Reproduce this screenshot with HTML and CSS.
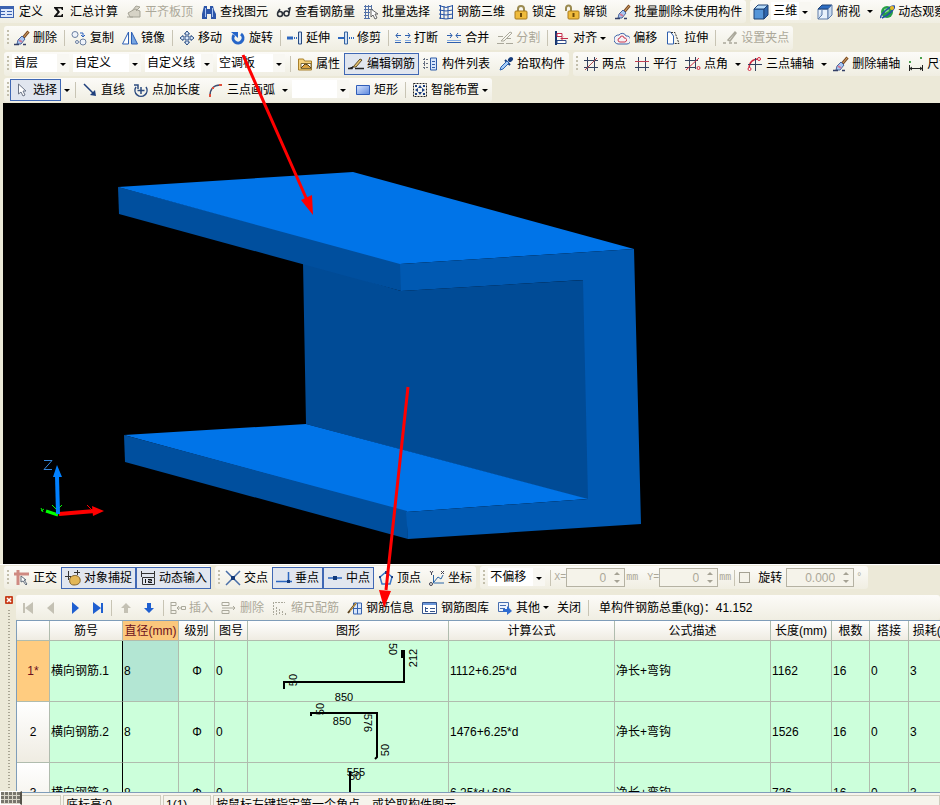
FILE: index.html
```html
<!DOCTYPE html>
<html lang="zh-CN">

<head>
    <meta charset="UTF-8">
    <meta name="viewport" content="width=device-width, initial-scale=1.0">
    <title>编辑钢筋</title>
    <link rel="stylesheet" href="styles.css">
</head>

<body>
    <!-- Icon sprite -->
    <svg class="sprite" width="0" height="0" aria-hidden="true">
        <symbol id="i-define" viewBox="0 0 16 16"><path fill="#3c62b0" d="M0 2h14v12H0z"/><path fill="#dfe9fb" d="M1 5h12v8H1z"/><path stroke="#3c62b0" d="M1 7.500h4M1 10.500h4M7 7.500h5M7 10.500h5"/></symbol>
        <symbol id="i-sum" viewBox="0 0 16 16"><path fill="#111" d="M3 3h9v3h-1l-1-1.500H6.500L9 8l-3 3.500h4L11 10h1v3H3v-1l3.500-4L3 4z"/></symbol>
        <symbol id="i-level" viewBox="0 0 16 16"><path fill="#d6d3c6" stroke="#a5a396" d="M2 9l7-4 5 2v6H4zM6 7l4-5 4 1-4 4M1 13h6"/></symbol>
        <symbol id="i-find" viewBox="0 0 16 16"><path fill="#2c55a8" d="M3 2h3v3h3V2h3l1 4 2 4v5h-5v-5H6v5H1v-5l1-4z"/><path stroke="#a9c4f2" d="M4.500 4v9M11.500 4v9"/></symbol>
        <symbol id="i-glasses" viewBox="0 0 16 16"><g fill="none" stroke="#2b3038" stroke-width="1.500"><circle cx="4" cy="10" r="2.500"/><circle cx="10.500" cy="9.500" r="2.500"/><path d="M6 10l2-1M13 9l1-5-2 1M2 8l2-3"/></g></symbol>
        <symbol id="i-batch" viewBox="0 0 16 16"><path fill="none" stroke="#5472a8" d="M1 2.500h8M1 5.500h9M1 8.500h6M1 11.500h5M2.500 1v13M5.500 1v13M8.500 1v6M1 14.500h6"/><path fill="#fff" stroke="#666" d="M8 5v8l2-2 2 4 2-1-2-4h3z"/></symbol>
        <symbol id="i-mesh" viewBox="0 0 16 16"><path fill="none" stroke="#2955a5" d="M1 1.500l7 2 7-2M1 6l7 1 7-1M1 10l7 1 7-1M1 14l7 1 7-1M2.500 1v14M6 2v13M10 2v13M14.500 1v14"/></symbol>
        <symbol id="i-lock" viewBox="0 0 16 16"><path fill="none" stroke="#9a8a50" stroke-width="2" d="M5 8V5a3 3 0 0 1 6 0v3"/><rect x="2" y="7" width="12" height="8" rx="1" fill="#efbb3c" stroke="#a87a1c"/><path stroke="#6d4a08" stroke-width="2" d="M8 9v4"/></symbol>
        <symbol id="i-unlock" viewBox="0 0 16 16"><path fill="none" stroke="#9a8a50" stroke-width="2" d="M2 7V4a2.500 2.500 0 0 1 5 0v3"/><rect x="4" y="7" width="11" height="8" rx="1" fill="#efbb3c" stroke="#a87a1c"/><path stroke="#6d4a08" stroke-width="2" d="M9.500 9v4"/></symbol>
        <symbol id="i-brush" viewBox="0 0 16 16"><path stroke="#7a4b26" stroke-width="3" d="M14.500 1.500L9 8"/><path stroke="#dfae6b" d="M14.500 1.500L9 8"/><path fill="#a8c6f0" stroke="#48649c" d="M8 6l3 3-4 5H3l1-4z"/><path stroke="#d27a96" stroke-width="2" d="M5 10l3 2"/><path stroke="#333f66" stroke-width="1.500" d="M0 14.500h5M9 14.500h3"/></symbol>
        <symbol id="i-cube" viewBox="0 0 16 16"><path fill="#5595d8" stroke="#1e4277" d="M1 5h10v10H1z"/><path fill="#b8dcfa" stroke="#1e4277" d="M1 5l4-4h10l-4 4z"/><path fill="#2f66ad" stroke="#1e4277" d="M11 5l4-4v10l-4 4z"/></symbol>
        <symbol id="i-cubetop" viewBox="0 0 16 16"><path fill="#e8f1fb" stroke="#5d7ba8" d="M1 5h10v10H1z"/><path fill="#2d6cc0" stroke="#1e4277" d="M1 5l4-4h10l-4 4z"/><path fill="#c9dbf0" stroke="#5d7ba8" d="M11 5l4-4v10l-4 4zM1 15l4-4V5"/></symbol>
        <symbol id="i-orbit" viewBox="0 0 16 16"><circle cx="8" cy="8" r="6" fill="#27a046"/><path fill="#8be08f" d="M5 5l4-1 1 3-4 2z"/><path fill="none" stroke="#2450a8" stroke-width="1.500" d="M2 14C0 11 12 1 15 2s-6 10-12 12"/><circle cx="13" cy="4" r="2" fill="#e8b820"/></symbol>
        <symbol id="i-copy" viewBox="0 0 16 16"><g fill="#eef3fb" stroke="#6b7f9f"><circle cx="4" cy="4.500" r="3"/><circle cx="12" cy="12" r="3"/><circle cx="6" cy="12" r="1.500"/></g><path fill="none" stroke="#2a61c0" d="M9 3h3v4M10 5l2 2 2-2"/></symbol>
        <symbol id="i-mirror" viewBox="0 0 16 16"><path fill="#fff" stroke="#2c5fb4" d="M6.500 2v12h-6z"/><path fill="#78a6e2" stroke="#2c5fb4" d="M9.500 2v12h6z"/></symbol>
        <symbol id="i-move" viewBox="0 0 16 16"><path fill="#dce9fa" stroke="#2a4d82" d="M8 1l2.500 3H9v3h3V5.500L15 8l-3 2.500V9H9v3h1.500L8 15l-2.500-3H7V9H4v1.500L1 8l3-2.500V7h3V4H5.500z"/></symbol>
        <symbol id="i-rotate" viewBox="0 0 16 16"><path fill="none" stroke="#2665c8" stroke-width="3" d="M4 5a5 5 0 1 0 7-1"/><path fill="#2665c8" d="M1 2h7v6z"/></symbol>
        <symbol id="i-extend" viewBox="0 0 16 16"><path stroke="#2e68c0" stroke-width="3" d="M0 8h6"/><path stroke="#2e68c0" stroke-width="2" stroke-dasharray="1 1" d="M7 8h4"/><path fill="#cfe0f8" stroke="#274a80" d="M11.500 2h3v12h-3z"/></symbol>
        <symbol id="i-trim" viewBox="0 0 16 16"><path stroke="#2e68c0" stroke-width="2" d="M0 8h6"/><path stroke="#2e68c0" stroke-width="2" stroke-dasharray="1 1" d="M11 8h5"/><path fill="#cfe0f8" stroke="#35639f" d="M6.500 2h3v12h-3z"/></symbol>
        <symbol id="i-break" viewBox="0 0 16 16"><path fill="none" stroke="#2e5fae" d="M0 12.500h6M10 12.500h6M1 5.500h5M10 5.500h5M3 3L1 5.500 3 8M13 3l2 2.500L13 8"/><path stroke="#86aee6" d="M0 10.500h6M10 10.500h6"/></symbol>
        <symbol id="i-join" viewBox="0 0 16 16"><path fill="none" stroke="#2e5fae" d="M1 12.500h14M1 5.500h5M10 5.500h5M4 3l2 2.500L4 8M12 3l-2 2.500L12 8"/><path stroke="#86aee6" d="M1 10.500h14"/></symbol>
        <symbol id="i-split" viewBox="0 0 16 16"><path fill="none" stroke="#aaa89b" d="M0 13.500h7M9 13.500h7M4 11l9-9 2 1-8 8zM1 6.500h5M10 8.500h4"/></symbol>
        <symbol id="i-align" viewBox="0 0 16 16"><path stroke="#17356e" stroke-width="2" d="M2 1v14"/><path fill="#fff" stroke="#c22b48" d="M3 3.500h5v3H3z"/><path fill="#fff" stroke="#2a4a88" d="M3 10.500h9v3H3z"/><path fill="none" stroke="#c22b48" d="M14 8.500H7M9 6.500l-2 2 2 2"/></symbol>
        <symbol id="i-offset" viewBox="0 0 16 16"><path fill="#f6f0f4" stroke="#3d66a8" d="M5 5a4 4 0 0 1 7 1 4 4 0 0 1 1 8H4a4 4 0 0 1 1-9z"/><path fill="none" stroke="#c8374e" d="M6 8a2 2 0 0 1 4 0 2 2 0 0 1 1 4H6a2 2 0 0 1 0-4z"/></symbol>
        <symbol id="i-stretch" viewBox="0 0 16 16"><path fill="#fff" stroke="#2e5fae" d="M2.500 2v12h6V6l-3-4z"/><path fill="none" stroke="#333" stroke-dasharray="2 1" d="M6 2.500h4l4 11H9"/></symbol>
        <symbol id="i-grip" viewBox="0 0 16 16"><path fill="none" stroke="#aaa89b" stroke-width="1.500" d="M1 13h3M7 13h3M12 13h3M6 10l7-8 1 1-6 8z"/></symbol>
        <symbol id="i-prop" viewBox="0 0 16 16"><path fill="#f6d27c" stroke="#a8802c" d="M1.500 3h5l1 2h7v9h-13z"/><path fill="#fff" stroke="#7c6a3a" d="M4 7.500h10v5H4z"/><path fill="#d8a040" stroke="#5b4210" d="M4 12l4-4 3 1 3 3"/></symbol>
        <symbol id="i-editbar" viewBox="0 0 16 16"><path stroke="#222" stroke-width="1.500" d="M0 12.500h4l1-2M7 12.500h9"/><path fill="#e8c46e" stroke="#5b4a28" d="M5 11l7-8 2 1-6 7z"/></symbol>
        <symbol id="i-list" viewBox="0 0 16 16"><path stroke="#666f80" stroke-dasharray="2 1" d="M0 3.500h5M0 7.500h5M0 11.500h5M1.500 2v12"/><path fill="#d6e5fa" stroke="#2f5ca8" d="M7.500 2h6v12h-6z"/><path stroke="#2f5ca8" d="M9 5.500h3M9 8.500h3M9 11.500h3"/></symbol>
        <symbol id="i-pick" viewBox="0 0 16 16"><path stroke="#153c7c" stroke-width="4" stroke-linecap="round" d="M12 4l1-1"/><path stroke="#153c7c" stroke-width="2" d="M7 4l5 5"/><path fill="#a7cdf6" stroke="#2a61b2" d="M9 5l2 2-6 6-3 1 1-3z"/></symbol>
        <symbol id="i-twopt" viewBox="0 0 16 16"><path fill="none" stroke="#33415e" d="M1 4.500h14M1 11.500h14M4.500 1v14M11.500 1v14"/><path stroke="#b34c52" d="M2 14L14 2"/></symbol>
        <symbol id="i-parallel" viewBox="0 0 16 16"><path fill="none" stroke="#33415e" d="M4.500 1v14M11.500 1v14M1 11.500h14"/><path stroke="#c04050" d="M1 5.500h14"/></symbol>
        <symbol id="i-ptangle" viewBox="0 0 16 16"><path fill="none" stroke="#33415e" d="M4.500 1v14M10.500 1v12M0 4.500h13M0 11.500h10"/><path fill="none" stroke="#d02840" d="M1 14L14 2"/><circle cx="13.500" cy="12" r="1.500" fill="none" stroke="#d02840"/></symbol>
        <symbol id="i-threeaxis" viewBox="0 0 16 16"><path fill="none" stroke="#d02840" stroke-width="1.500" d="M2 13c0-6 3-10 10-10"/><path stroke="#33415e" d="M1 8.500h14M8.500 2v13"/><circle cx="2.500" cy="13" r="1.500" fill="#fff" stroke="#d02840"/><circle cx="12" cy="3" r="1.500" fill="#fff" stroke="#d02840"/></symbol>
        <symbol id="i-dim" viewBox="0 0 16 16"><path fill="none" stroke="#222" d="M1.500 9v6M14.500 9v6M2 12.500h12M4 11l-2 1.500L4 14M12 11l2 1.500-2 1.500"/><path fill="#48a04c" d="M1 5h2v2H1zM12 1h2v2h-2z"/></symbol>
        <symbol id="i-cursor" viewBox="0 0 16 16"><path fill="#fff" stroke="#6b7486" d="M4.500 2v10l2.500-2 2 4 2-1-2-4h3z"/></symbol>
        <symbol id="i-line" viewBox="0 0 16 16"><path stroke="#1f3f7c" stroke-width="1.500" d="M2 2l10 10"/><path fill="#1f3f7c" d="M14 14l-6-1 5-5z"/></symbol>
        <symbol id="i-ptlen" viewBox="0 0 16 16"><path fill="none" stroke="#2d4c80" stroke-width="1.500" d="M3 5a6 6 0 1 0 10 0M1 3h4v4M8 5v7M4.500 8.500h7"/></symbol>
        <symbol id="i-arc" viewBox="0 0 16 16"><path fill="none" stroke="#3f4e70" stroke-width="1.500" d="M2 14C2 7 6 3 12 3"/><path fill="#e0503c" d="M1 12h2v3H1zM11 2h3v2h-3zM4 5h2v2H4z"/></symbol>
        <symbol id="i-rect" viewBox="0 0 16 16"><defs><linearGradient id="g-rect" x2="1" y2="1"><stop stop-color="#d9e6ff"/><stop offset="1" stop-color="#5a86dc"/></linearGradient></defs><path fill="url(#g-rect)" stroke="#2e5cb8" d="M1.500 3.500h13v9h-13z"/></symbol>
        <symbol id="i-smart" viewBox="0 0 16 16"><path fill="none" stroke="#222" stroke-dasharray="2 1" d="M1.500 1.500h13v13h-13z"/><path fill="#1b3e80" d="M8 3l2 3H6zM8 13l2-3H6zM3 8l3-2v4zM13 8l-3-2v4zM3 3h2v2H3zM11 3h2v2h-2zM3 11h2v2H3zM11 11h2v2h-2z"/></symbol>
        <symbol id="i-ortho" viewBox="0 0 16 16"><path fill="none" stroke="#cf8a82" stroke-width="3" d="M4 15V4h11M0 4h4V0"/><path fill="#fff" stroke="#5f6a78" d="M7 6v6l2-1 3 4 1-1-3-4h2z"/></symbol>
        <symbol id="i-snap" viewBox="0 0 16 16"><path fill="none" stroke="#333" d="M3.500 1v9M0 6.500h6M12.500 0v5M9 2.500h6"/><path fill="#e3b757" stroke="#80602a" d="M5 8c3-4 9-3 10 1s-2 6-6 6-5-3-4-7z"/></symbol>
        <symbol id="i-dyn" viewBox="0 0 16 16"><path fill="none" stroke="#333" d="M1.500 1v6M14.500 1v6M2 3.500h12M2.500 7.500h12v7h-12z"/><path fill="none" stroke="#111" d="M5.500 9v4M8 9.500h3.500v1.500H8.500v1.500H12"/></symbol>
        <symbol id="i-cross" viewBox="0 0 16 16"><path stroke="#4a6fa8" stroke-width="1.500" d="M1 1l14 14M15 1L1 15"/><path fill="#123a7c" d="M6 6h4v4H6z"/></symbol>
        <symbol id="i-perp" viewBox="0 0 16 16"><path stroke="#2b66c0" stroke-width="1.500" d="M0 11.500h16M12.500 2v9"/><path fill="#123a7c" d="M11 10h3v3h-3z"/></symbol>
        <symbol id="i-mid" viewBox="0 0 16 16"><path stroke="#2b66c0" stroke-width="1.500" d="M1 8h14"/><path fill="#123a7c" d="M6 6h4v4H6z"/></symbol>
        <symbol id="i-vertex" viewBox="0 0 16 16"><path fill="none" stroke="#3b77c8" stroke-width="1.500" d="M8 2l6 5-2 7H4L2 7z"/><path fill="#1b3e80" d="M7 1h3v3H7zM1 6h2v2H1zM13 6h2v2h-2z"/></symbol>
        <symbol id="i-coord" viewBox="0 0 16 16"><path fill="none" stroke="#2b66a8" d="M4.500 5v8H15M5 12l4-5 3 2 2-4"/><path fill="none" stroke="#445" d="M1 1l1.500 2L4 1M2.500 3v2M12 1l3 3M15 1l-3 3"/><circle cx="2" cy="14" r="1.500" fill="none" stroke="#445"/></symbol>
        <symbol id="i-first" viewBox="0 0 16 16"><path fill="currentColor" d="M3 3h2v10H3zM13 2v12L5 8z"/></symbol>
        <symbol id="i-prev" viewBox="0 0 16 16"><path fill="currentColor" d="M11 2v12L4 8z"/></symbol>
        <symbol id="i-next" viewBox="0 0 16 16"><path fill="currentColor" d="M6 2v12l7-6z"/></symbol>
        <symbol id="i-last" viewBox="0 0 16 16"><path fill="currentColor" d="M12 3h2v10h-2zM4 2v12l8-6z"/></symbol>
        <symbol id="i-up" viewBox="0 0 16 16"><path fill="currentColor" d="M8 3l5 5h-3v5H6V8H3z"/></symbol>
        <symbol id="i-down" viewBox="0 0 16 16"><path fill="currentColor" d="M8 13l5-5h-3V3H6v5H3z"/></symbol>
        <symbol id="i-insert" viewBox="0 0 16 16"><path fill="none" stroke="#aaa89b" d="M1 2.500h5v3H1M1 10.500h5v3H1M1 2v12M7 8h4M9 6L7 8l2 2M11.500 6.500h4v3h-4z"/></symbol>
        <symbol id="i-delrow" viewBox="0 0 16 16"><path fill="none" stroke="#aaa89b" d="M1 2.500h7v3H1zM1 10.500h7v3H1zM1 8h13M12 6l2 2-2 2"/></symbol>
        <symbol id="i-scale" viewBox="0 0 16 16"><path fill="none" stroke="#aaa89b" d="M1.500 2v13M4.500 7v8M7.500 9v6M10.500 11v4M13.500 13v2M3 2.500h10" stroke-dasharray="2 1"/></symbol>
        <symbol id="i-info" viewBox="0 0 16 16"><path fill="#d9e7fb" stroke="#3864b0" d="M6.500 3h8v11h-8zM10.500 3v11M7 8.500h8"/><path stroke="#5b421d" stroke-width="2" d="M1 13L9 3"/><path stroke="#e2b04c" d="M3 11l6-8"/></symbol>
        <symbol id="i-lib" viewBox="0 0 16 16"><path fill="#fff" stroke="#35548c" d="M.5 2.500h14v11H.5z"/><path fill="#6c97d8" d="M1 3h13v2H1z"/><path stroke="#35548c" d="M3 8.500h3M8 8.500h5M3 11.500h3M8 11.500h5M3.500 7v5"/></symbol>
        <symbol id="i-other" viewBox="0 0 16 16"><path fill="#eef4fd" stroke="#486fb0" d="M1.500 2.500h10v9h-10z"/><path stroke="#486fb0" d="M3 5.500h6M3 8.500h5"/><path fill="#2f6cd0" d="M6 9h4V6l5 5-5 4v-3H6z"/></symbol>
    </svg>

    <div class="app">
        <header class="bars">
            <div class="bar-row first-row">
                <div class="toolbar continued">
                    <button class="tool"><svg class="icon"><use href="#i-define"/></svg>定义</button>
                    <button class="tool"><svg class="icon"><use href="#i-sum"/></svg>汇总计算</button>
                    <button class="tool" disabled><svg class="icon"><use href="#i-level"/></svg>平齐板顶</button>
                    <button class="tool"><svg class="icon"><use href="#i-find"/></svg>查找图元</button>
                    <button class="tool"><svg class="icon"><use href="#i-glasses"/></svg>查看钢筋量</button>
                    <button class="tool"><svg class="icon"><use href="#i-batch"/></svg>批量选择</button>
                    <button class="tool"><svg class="icon"><use href="#i-mesh"/></svg>钢筋三维</button>
                    <button class="tool"><svg class="icon"><use href="#i-lock"/></svg>锁定</button>
                    <button class="tool"><svg class="icon"><use href="#i-unlock"/></svg>解锁</button>
                    <button class="tool"><svg class="icon"><use href="#i-brush"/></svg>批量删除未使用构件</button>
                </div>
                <div class="toolbar view-bar">
                    <svg class="icon"><use href="#i-cube"/></svg>
                    <div class="combo combo-xs"><select aria-label="视图"><option>三维</option></select></div>
                    <button class="tool"><svg class="icon"><use href="#i-cubetop"/></svg>俯视</button>
                    <button class="drop" aria-label="俯视选项"></button>
                    <button class="tool"><svg class="icon"><use href="#i-orbit"/></svg>动态观察</button>
                </div>
            </div>

            <div class="bar-row">
                <div class="toolbar">
                    <span class="grip"></span>
                    <button class="tool"><svg class="icon"><use href="#i-brush"/></svg>删除</button>
                    <span class="sep"></span>
                    <button class="tool"><svg class="icon"><use href="#i-copy"/></svg>复制</button>
                    <button class="tool"><svg class="icon"><use href="#i-mirror"/></svg>镜像</button>
                    <span class="sep"></span>
                    <button class="tool"><svg class="icon"><use href="#i-move"/></svg>移动</button>
                    <button class="tool"><svg class="icon"><use href="#i-rotate"/></svg>旋转</button>
                    <span class="sep"></span>
                    <button class="tool"><svg class="icon"><use href="#i-extend"/></svg>延伸</button>
                    <button class="tool"><svg class="icon"><use href="#i-trim"/></svg>修剪</button>
                    <span class="sep"></span>
                    <button class="tool"><svg class="icon"><use href="#i-break"/></svg>打断</button>
                    <button class="tool"><svg class="icon"><use href="#i-join"/></svg>合并</button>
                    <button class="tool" disabled><svg class="icon"><use href="#i-split"/></svg>分割</button>
                    <span class="sep"></span>
                    <button class="tool has-menu"><svg class="icon"><use href="#i-align"/></svg>对齐</button>
                    <button class="tool"><svg class="icon"><use href="#i-offset"/></svg>偏移</button>
                    <button class="tool"><svg class="icon"><use href="#i-stretch"/></svg>拉伸</button>
                    <span class="sep"></span>
                    <button class="tool" disabled><svg class="icon"><use href="#i-grip"/></svg>设置夹点</button>
                </div>
            </div>

            <div class="bar-row">
                <div class="toolbar">
                    <span class="grip"></span>
                    <div class="combo combo-s"><select aria-label="楼层"><option>首层</option></select></div>
                    <div class="combo combo-m"><select aria-label="构件类型"><option>自定义</option></select></div>
                    <div class="combo combo-m"><select aria-label="构件种类"><option>自定义线</option></select></div>
                    <div class="combo combo-m"><select aria-label="构件"><option>空调板</option></select></div>
                    <span class="sep"></span>
                    <button class="tool"><svg class="icon"><use href="#i-prop"/></svg>属性</button>
                    <button class="tool pressed"><svg class="icon"><use href="#i-editbar"/></svg>编辑钢筋</button>
                    <button class="tool"><svg class="icon"><use href="#i-list"/></svg>构件列表</button>
                    <button class="tool"><svg class="icon"><use href="#i-pick"/></svg>拾取构件</button>
                </div>
                <div class="toolbar">
                    <span class="grip"></span>
                    <button class="tool"><svg class="icon"><use href="#i-twopt"/></svg>两点</button>
                    <button class="tool"><svg class="icon"><use href="#i-parallel"/></svg>平行</button>
                    <button class="tool"><svg class="icon"><use href="#i-ptangle"/></svg>点角</button>
                    <button class="drop" aria-label="点角选项"></button>
                    <button class="tool"><svg class="icon"><use href="#i-threeaxis"/></svg>三点辅轴</button>
                    <button class="drop" aria-label="三点辅轴选项"></button>
                    <button class="tool"><svg class="icon"><use href="#i-brush"/></svg>删除辅轴</button>
                    <button class="tool"><svg class="icon"><use href="#i-dim"/></svg>尺寸标注</button>
                </div>
            </div>

            <div class="bar-row">
                <div class="toolbar">
                    <span class="grip"></span>
                    <button class="tool pressed"><svg class="icon"><use href="#i-cursor"/></svg>选择</button>
                    <button class="drop" aria-label="选择选项"></button>
                    <span class="sep"></span>
                    <button class="tool"><svg class="icon"><use href="#i-line"/></svg>直线</button>
                    <button class="tool"><svg class="icon"><use href="#i-ptlen"/></svg>点加长度</button>
                    <button class="tool"><svg class="icon"><use href="#i-arc"/></svg>三点画弧</button>
                    <button class="drop" aria-label="画弧选项"></button>
                    <div class="combo combo-s"><select aria-label="弧参数"><option></option></select></div>
                    <button class="tool"><svg class="icon"><use href="#i-rect"/></svg>矩形</button>
                    <span class="sep"></span>
                    <button class="tool has-menu"><svg class="icon"><use href="#i-smart"/></svg>智能布置</button>
                </div>
            </div>
        </header>

        <main class="scene">
            <svg viewBox="3 103 937 461" preserveAspectRatio="xMinYMin meet" role="img" aria-label="空调板三维视图">
                <!-- web and flange edges -->
                <path fill="#004b96" d="M303 262l98 29 184-11 4 220-283-76z"/>
                <path fill="#004f9e" d="M118 187l283 76v28L119 214z"/>
                <path fill="#0074e8" d="M118 187l235-15 281 77-234 15z"/>
                <path fill="#0074e8" d="M124 435l182-11 282 75-182 13z"/>
                <path fill="#004f9e" d="M124 435l283 76 1 28-283-77z"/>
                <path fill="#0059b2" d="M400 264l234-15 7 275-233 15-2-27 182-13-5-219-182 11z"/>
                <!-- axes -->
                <path stroke="#0f0" stroke-width="3" d="M46 511l12 4"/>
                <path stroke="#0f0" d="M41 511l3-2M41 508l2 4M52 505l5 5 5-5"/>
                <path stroke="#f00" stroke-width="4" d="M59 514l36-3"/>
                <path fill="#f00" d="M92 506l12 5-11 5z"/>
                <path stroke="#f00" d="M87 505l6 6"/>
                <path stroke="#0080ff" stroke-width="4" d="M58 514l-1-38"/>
                <path fill="#0080ff" d="M57 465l5 12h-9z"/>
                <path fill="none" stroke="#3487dc" d="M44 460.500h8l-8 9h8"/>
            </svg>
        </main>

        <div class="bar-row snap-row">
            <div class="toolbar">
                <span class="grip"></span>
                <button class="tool"><svg class="icon"><use href="#i-ortho"/></svg>正交</button>
                <button class="tool pressed"><svg class="icon"><use href="#i-snap"/></svg>对象捕捉</button>
                <button class="tool pressed"><svg class="icon"><use href="#i-dyn"/></svg>动态输入</button>
            </div>
            <div class="toolbar">
                <span class="grip"></span>
                <button class="tool"><svg class="icon"><use href="#i-cross"/></svg>交点</button>
                <button class="tool pressed"><svg class="icon"><use href="#i-perp"/></svg>垂点</button>
                <button class="tool pressed"><svg class="icon"><use href="#i-mid"/></svg>中点</button>
                <button class="tool"><svg class="icon"><use href="#i-vertex"/></svg>顶点</button>
                <button class="tool"><svg class="icon"><use href="#i-coord"/></svg>坐标</button>
            </div>
            <div class="toolbar">
                <span class="grip"></span>
                <div class="combo combo-s"><select aria-label="偏移方式"><option>不偏移</option></select></div>
                <span class="sep"></span>
                <label class="unit" for="off-x">X=</label>
                <div class="spin"><input id="off-x" type="text" value="0" disabled></div>
                <span class="unit">mm</span>
                <label class="unit unit-y" for="off-y">Y=</label>
                <div class="spin"><input id="off-y" type="text" value="0" disabled></div>
                <span class="unit">mm</span>
                <span class="sep"></span>
                <input class="check" id="rot" type="checkbox">
                <label class="rot-label" for="rot">旋转</label>
                <div class="spin spin-wide"><input type="text" value="0.000" aria-label="旋转角度" disabled></div>
                <span class="unit degree">°</span>
            </div>
        </div>

        <section class="dock">
            <div class="gutter">
                <button class="close" aria-label="关闭窗口"><svg viewBox="0 0 8 8"><path stroke="#fff" stroke-width="1.500" d="M2 2l4 4M6 2L2 6"/></svg></button>
                <span class="dots"></span>
            </div>
            <div class="panel">
                <div class="toolbar panel-bar">
                    <button class="nav" aria-label="首行" disabled><svg class="icon"><use href="#i-first"/></svg></button>
                    <button class="nav" aria-label="上一行" disabled><svg class="icon"><use href="#i-prev"/></svg></button>
                    <button class="nav" aria-label="下一行"><svg class="icon"><use href="#i-next"/></svg></button>
                    <button class="nav" aria-label="末行"><svg class="icon"><use href="#i-last"/></svg></button>
                    <span class="sep"></span>
                    <button class="nav" aria-label="上移" disabled><svg class="icon"><use href="#i-up"/></svg></button>
                    <button class="nav" aria-label="下移"><svg class="icon"><use href="#i-down"/></svg></button>
                    <span class="sep"></span>
                    <button class="tool" disabled><svg class="icon"><use href="#i-insert"/></svg>插入</button>
                    <button class="tool" disabled><svg class="icon"><use href="#i-delrow"/></svg>删除</button>
                    <button class="tool" disabled><svg class="icon"><use href="#i-scale"/></svg>缩尺配筋</button>
                    <button class="tool"><svg class="icon"><use href="#i-info"/></svg>钢筋信息</button>
                    <button class="tool"><svg class="icon"><use href="#i-lib"/></svg>钢筋图库</button>
                    <button class="tool has-menu"><svg class="icon"><use href="#i-other"/></svg>其他</button>
                    <button class="tool">关闭</button>
                    <span class="sep"></span>
                    <span class="total">单构件钢筋总重(kg)：41.152</span>
                </div>
                <div class="grid">
                    <table>
                        <colgroup>
                            <col class="c-row"><col class="c-name"><col class="c-dia"><col class="c-grade"><col class="c-no"><col class="c-shape">
                            <col class="c-calc"><col class="c-desc"><col class="c-len"><col class="c-count"><col class="c-lap"><col>
                        </colgroup>
                        <thead>
                            <tr>
                                <th></th>
                                <th>筋号</th>
                                <th class="active">直径(mm)</th>
                                <th>级别</th>
                                <th>图号</th>
                                <th>图形</th>
                                <th>计算公式</th>
                                <th>公式描述</th>
                                <th>长度(mm)</th>
                                <th>根数</th>
                                <th>搭接</th>
                                <th>损耗(%)</th>
                            </tr>
                        </thead>
                        <tbody>
                            <tr>
                                <th class="current">1*</th>
                                <td class="name">横向钢筋.1</td>
                                <td class="selected">8</td>
                                <td class="mid">Φ</td>
                                <td>0</td>
                                <td class="shape">
                                    <svg viewBox="248 641 200 60">
                                        <path d="M284 689v-7h120v-32"/>
                                        <path class="hook" d="M403 650v8"/>
                                        <text transform="translate(297 680) rotate(-90)">50</text>
                                        <text transform="translate(389 649) rotate(90)">50</text>
                                        <text transform="translate(417 658) rotate(-90)">212</text>
                                        <text x="344" y="701">850</text>
                                    </svg>
                                </td>
                                <td>1112+6.25*d</td>
                                <td>净长+弯钩</td>
                                <td>1162</td>
                                <td>16</td>
                                <td>0</td>
                                <td>3</td>
                            </tr>
                            <tr>
                                <th>2</th>
                                <td class="name">横向钢筋.2</td>
                                <td>8</td>
                                <td class="mid">Φ</td>
                                <td>0</td>
                                <td class="shape">
                                    <svg viewBox="248 702 200 60">
                                        <path d="M311 716v-3h66v44l-2 2"/>
                                        <text transform="translate(324 709) rotate(-90)">50</text>
                                        <text x="342" y="725">850</text>
                                        <text transform="translate(364 723) rotate(90)">576</text>
                                        <text transform="translate(389 750) rotate(-90)">50</text>
                                    </svg>
                                </td>
                                <td>1476+6.25*d</td>
                                <td>净长+弯钩</td>
                                <td>1526</td>
                                <td>16</td>
                                <td>0</td>
                                <td>3</td>
                            </tr>
                            <tr>
                                <th>3</th>
                                <td class="name">横向钢筋.3</td>
                                <td>8</td>
                                <td class="mid">Φ</td>
                                <td>0</td>
                                <td class="shape">
                                    <svg viewBox="248 763 200 60">
                                        <path d="M350 772v50"/>
                                        <text x="356" y="776">555</text>
                                        <text x="355" y="780">50</text>
                                    </svg>
                                </td>
                                <td>6.25*d+686</td>
                                <td>净长+弯钩</td>
                                <td>736</td>
                                <td>16</td>
                                <td>0</td>
                                <td>3</td>
                            </tr>
                        </tbody>
                    </table>
                </div>
            </div>
        </section>

        <footer class="status">
            <span class="status-key"></span>
            <span class="status-floor">底标高:0</span>
            <span class="status-count">1(1)</span>
            <span class="status-hint">按鼠标左键指定第一个角点，或拾取构件图元</span>
        </footer>

        <button class="keyboard" aria-label="软键盘"></button>

        <!-- Callout arrows over the window -->
        <svg class="callouts" viewBox="0 0 940 805" width="940" height="805" aria-hidden="true">
            <path stroke="#f00" stroke-width="3" d="M243 55l64 145M408 387l-22 203"/>
            <path fill="#f00" d="M313 215l-12-15 11-5zM384 608l-5-18 12 1z"/>
        </svg>
    </div>
</body>

</html>
```
FILE: styles.css
```css
* {
    box-sizing: border-box;
}

body {
    margin: 0;
    background-color: #ece9d8;
    overflow: hidden;
}

body,
button,
input,
select {
    font-family: "Liberation Sans", "Noto Sans CJK SC", sans-serif;
    font-size: 12px;
    line-height: 18px;
    color: #000;
}

button {
    border: 0;
    padding: 0;
    background: none;
}

.sprite {
    position: absolute;
}

.app {
    position: relative;
    display: flex;
    flex-direction: column;
    height: 100vh;
    overflow: hidden;
}

/* Toolbars */
.bar-row {
    display: flex;
    flex: none;
    height: 26px;
    padding: 1px 0;
    overflow: hidden;
}

.first-row {
    height: 25px;
    padding: 0 0 2px;
}

.toolbar {
    display: flex;
    flex: none;
    align-items: center;
    margin-left: 4px;
    border-radius: 3px;
    background: linear-gradient(#fcfbf8, #f0eee2);
    white-space: nowrap;
}

.continued {
    margin-left: -4px;
}

.grip {
    width: 2px;
    height: 16px;
    margin: 0 1px 0 3px;
    background: repeating-linear-gradient(#c3bfac 0 2px, transparent 2px 4px);
}

.sep {
    width: 1px;
    height: 16px;
    margin: 0 2px 0 3px;
    background-color: #c8c4b4;
}

.icon {
    flex: none;
    display: block;
    width: 16px;
    height: 16px;
}

.view-bar > .icon {
    margin-left: 3px;
}

.tool {
    display: flex;
    flex: none;
    align-items: center;
    gap: 3px;
    height: 22px;
    padding: 0 4px;
    white-space: nowrap;
}

.tool:disabled {
    color: #aca899;
}

.pressed {
    background-color: #e1e6ef;
    box-shadow: inset 0 0 0 1px #4068b4;
}

.has-menu::after,
.drop::after,
.combo::after {
    content: "";
    border: 3px solid transparent;
    border-top-color: #000;
    border-bottom: 0;
}

.drop {
    display: flex;
    align-items: center;
    justify-content: center;
    width: 11px;
    height: 22px;
}

.combo {
    position: relative;
    height: 20px;
    margin: 0 2px;
}

.combo::after {
    position: absolute;
    top: 9px;
    right: 3px;
    pointer-events: none;
}

.combo select {
    display: block;
    width: 100%;
    height: 18px;
    padding: 0 0 0 2px;
    border: 0;
    border-right: 12px solid #f8f7f2;
    border-radius: 0;
    background-color: #fff;
    appearance: none;
}

.combo-xs {
    width: 40px;
}

.combo-s {
    width: 57px;
}

.combo-m {
    width: 68px;
}

/* 3D view */
.scene {
    flex: 1;
    min-height: 0;
    margin-left: 3px;
    background-color: #000;
}

.scene svg {
    display: block;
    width: 100%;
    height: 100%;
}

/* Snap options */
.snap-row {
    height: 28px;
    padding: 1px 0 3px;
    border-top: 1px solid #fff;
}

.unit {
    padding-left: 1px;
    font-family: "Liberation Mono", monospace;
    font-size: 10px;
    color: #aca899;
}

.unit-y {
    margin-left: 8px;
}

.degree {
    width: 14px;
    padding-left: 2px;
}

.spin {
    position: relative;
    width: 59px;
}

.spin-wide {
    width: 68px;
}

.spin input {
    display: block;
    width: 100%;
    height: 19px;
    padding: 0 18px 0 2px;
    border: 1px solid #b5b2a3;
    background-color: #f5f3ea;
    color: #aca899;
    text-align: right;
}

.spin::before,
.spin::after {
    content: "";
    position: absolute;
    right: 5px;
    border: 3px solid transparent;
}

.spin::before {
    top: 4px;
    border-top: 0;
    border-bottom-color: #a5a294;
}

.spin::after {
    bottom: 4px;
    border-bottom: 0;
    border-top-color: #a5a294;
}

.check {
    width: 11px;
    height: 11px;
    margin: 0 8px 0 2px;
    border: 1px solid #a5a294;
    background-color: #f5f3ea;
    appearance: none;
}

.rot-label {
    margin-right: 4px;
}

/* Rebar panel */
.dock {
    display: flex;
    flex: none;
    padding-top: 3px;
}

.gutter {
    display: flex;
    flex: none;
    flex-direction: column;
    align-items: center;
    gap: 6px;
    width: 16px;
    padding: 1px 0 4px 2px;
}

.close {
    width: 8px;
    height: 8px;
    border-radius: 1px;
    background-color: #c8401e;
}

.close svg {
    display: block;
}

.dots {
    flex: 1;
    width: 2px;
    background: repeating-linear-gradient(#a9a593 0 1px, transparent 1px 3px);
}

.panel {
    flex: 1;
    min-width: 0;
}

.panel-bar {
    height: 25px;
    margin-left: 0;
}

.nav {
    display: flex;
    justify-content: center;
    width: 23px;
    color: #1f5fd0;
}

.nav:disabled {
    color: #c4c1b4;
}

.total {
    padding-left: 8px;
}

.grid {
    height: 173px;
    border: 1px solid #7f9db9;
    border-right: 0;
    background-color: #ccffdb;
    overflow: hidden;
}

table {
    width: calc(100% + 20px);
    table-layout: fixed;
    border-collapse: separate;
    border-spacing: 0;
}

.c-row, .c-no { width: 33px; }
.c-name { width: 73px; }
.c-dia { width: 56px; }
.c-grade { width: 36px; }
.c-shape { width: 201px; }
.c-calc { width: 166px; }
.c-desc { width: 156px; }
.c-len { width: 61px; }
.c-count { width: 38px; }
.c-lap { width: 39px; }

th,
td {
    padding: 0 0 0 1px;
    border-right: 1px solid #b0bcae;
    border-bottom: 1px solid #b0bcae;
    white-space: nowrap;
}

th {
    padding: 0;
    background: linear-gradient(#fff, #efece2);
    font-weight: normal;
}

thead th {
    height: 20px;
}

td {
    height: 61px;
}

thead .active {
    background: #fbc77c;
    color: #6b0f1c;
}

.current {
    background: #ffcc80;
    color: #6b0f1c;
}

.name {
    border-right-color: #000;
}

.selected {
    background-color: #b3e6d3;
}

.mid {
    text-align: center;
}

.shape {
    padding: 0;
}

.shape svg {
    display: block;
    width: 200px;
    height: 60px;
    overflow: visible;
}

.shape path {
    fill: none;
    stroke: #000;
    stroke-width: 2px;
}

.shape .hook {
    stroke-width: 4px;
}

.shape text {
    font-size: 11px;
    text-anchor: middle;
}

/* Status bar */
.status {
    display: flex;
    flex: none;
    gap: 2px;
    height: 12px;
    padding-top: 2px;
    background-color: #f6f4ec;
    overflow: hidden;
}

.status span {
    height: 20px;
    padding-left: 2px;
    border: 1px solid #cfccbd;
    white-space: nowrap;
}

.status-key {
    width: 61px;
}

.status-floor {
    width: 98px;
}

.status-count {
    width: 48px;
}

.status-hint {
    flex: 1;
}

.keyboard {
    position: absolute;
    left: 0;
    bottom: 0;
    width: 22px;
    height: 14px;
    border: 1px solid #fff;
    border-right: 2px solid #55534a;
    background: repeating-linear-gradient(90deg, transparent 0 3px, #d8d5c8 3px 4px), repeating-linear-gradient(#77756c 0 3px, #d8d5c8 3px 4px);
}

.callouts {
    position: absolute;
    top: 0;
    left: 0;
    pointer-events: none;
}
```
